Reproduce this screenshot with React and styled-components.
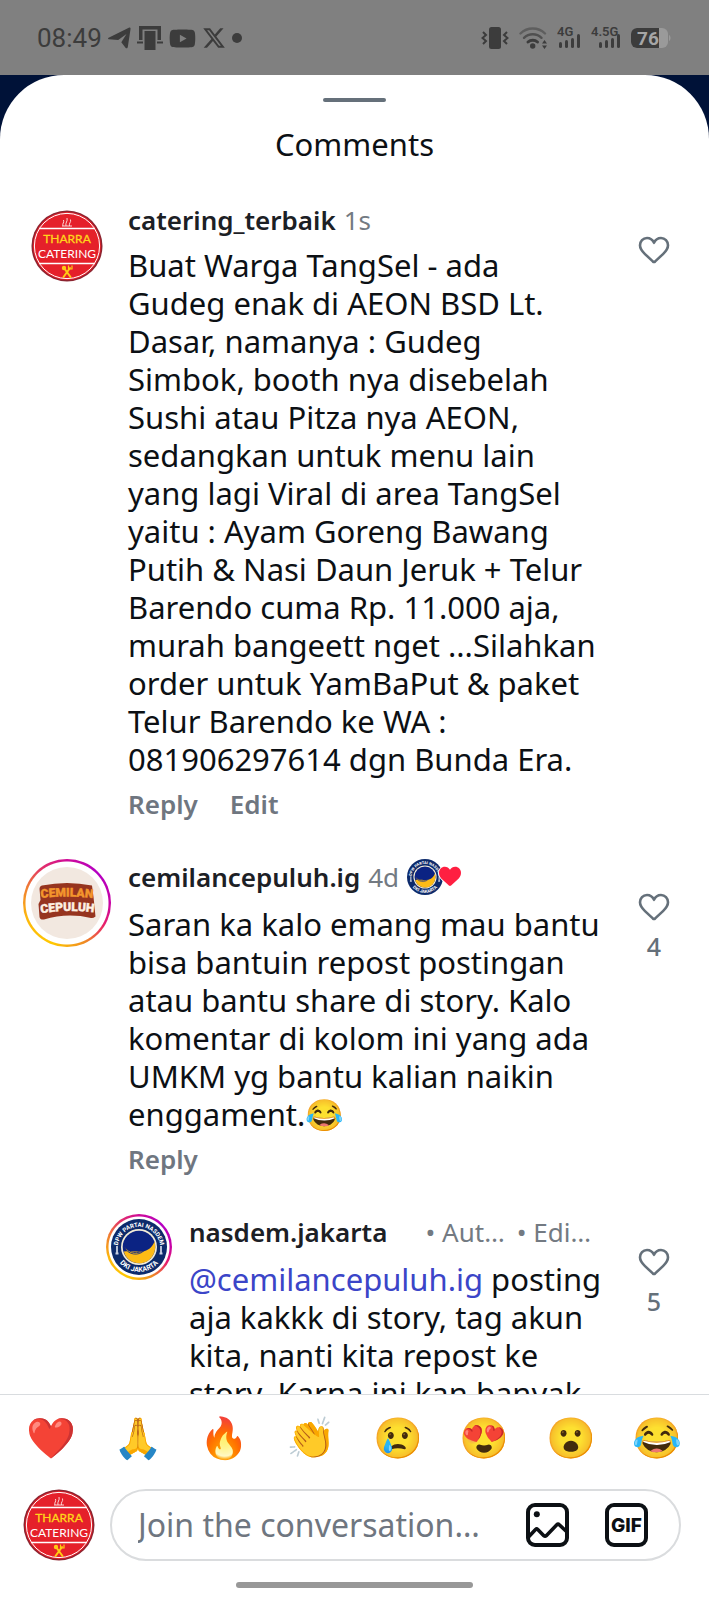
import React from 'react';
import styled, { createGlobalStyle, css } from 'styled-components';
import { FaYoutube, FaXTwitter } from 'react-icons/fa6';

const GlobalStyle = createGlobalStyle`
  * {
    box-sizing: border-box;
  }
  body {
    margin: 0;
    background: #001238;
  }
  button {
    border: none;
    padding: 0;
    background: none;
    font: inherit;
    color: inherit;
    cursor: pointer;
  }
`;

const Screen = styled.div`
  display: flex;
  flex-direction: column;
  height: 100vh;
  background: #001238;
  color: #0c1014;
  font-family: 'Noto Sans', 'Noto Color Emoji', sans-serif;
`;

/* status bar */

const StatusBar = styled.header`
  display: flex;
  flex: none;
  align-items: center;
  justify-content: space-between;
  height: 75px;
  padding: 1px 38px 0 37px;
  background: #808080;
  color: #3c3c3c;
  font-family: Roboto, sans-serif;
`;

const StatusGroup = styled.div`
  display: flex;
  align-items: center;
  gap: ${(p) => p.$gap};

  svg {
    display: block;
    flex: none;
  }
`;

const Clock = styled.time`
  font-size: 26px;
  line-height: 30px;
`;

/* sheet */

const Sheet = styled.main`
  display: flex;
  flex: 1;
  flex-direction: column;
  min-height: 0;
  border-radius: 64px 64px 0 0;
  background: #fff;
  overflow: hidden;
`;

const SheetHeader = styled.div`
  display: flex;
  flex: none;
  flex-direction: column;
  align-items: center;
  gap: 22px;
  padding-top: 23px;
`;

const Handle = styled.div`
  width: 63px;
  height: 4px;
  border-radius: 2px;
  background: #65707a;
`;

const Title = styled.h1`
  margin: 0;
  font-size: 31px;
  font-weight: 400;
  line-height: 40px;
`;

const List = styled.section`
  display: flex;
  flex: 1;
  flex-direction: column;
  gap: 37px;
  min-height: 0;
  padding-top: 38px;
  overflow: hidden;
`;

const Comment = styled.article`
  display: flex;
  flex: none;
  align-items: flex-start;
  gap: 17px;
  padding-left: ${(p) => (p.$nested ? '106px' : '23px')};
`;

const Avatar = styled.div`
  display: flex;
  flex: none;
  align-items: center;
  justify-content: center;
  width: ${(p) => (p.$small ? '66px' : '88px')};
  height: ${(p) => (p.$small ? '66px' : '88px')};
  border-radius: 50%;

  ${(p) =>
    p.$story &&
    css`
      background:
        radial-gradient(closest-side, #fff calc(100% - 3px), transparent calc(100% - 2px)),
        conic-gradient(
          #cf0a98,
          #b400c4 45deg,
          #c800a4 90deg,
          #e8206a 120deg,
          #ef8a24 155deg,
          #ffc800 200deg,
          #fdb80c 250deg,
          #f08030 290deg,
          #e2306a 325deg,
          #cf0a98
        );
    `}

  svg {
    display: block;
  }
`;

const Content = styled.div`
  flex: 1;
  min-width: 0;
`;

const Meta = styled.div`
  display: flex;
  align-items: center;
  gap: 8px;
  height: 36px;
  margin-bottom: ${(p) => (p.$loose ? '10px' : '8px')};
  color: #737a82;
  font-size: 26px;
  line-height: 36px;
  white-space: nowrap;
`;

const UserName = styled.a`
  color: #1c2025;
  font-weight: 600;
  text-decoration: none;
`;

const Tags = styled.span`
  display: flex;
  flex: 1;
  justify-content: flex-end;
  gap: 12px;
  padding-right: 12px;
`;

const LikedBy = styled.span`
  display: flex;
  align-items: center;

  svg {
    display: block;
  }
  svg + svg {
    margin-left: -6px;
  }
`;

const Body = styled.p`
  margin: 0;
  font-size: 31px;
  line-height: 38px;
`;

const Mention = styled.a`
  color: #3b45c8;
  text-decoration: none;
`;

const Actions = styled.div`
  display: flex;
  gap: 32px;
  margin-top: 8px;
  color: #6f7680;
  font-size: 26px;
  font-weight: 600;
  line-height: 36px;
`;

const Like = styled.button`
  display: flex;
  flex: none;
  flex-direction: column;
  align-items: center;
  gap: 8px;
  width: 110px;
  margin-left: -21px;
  padding-top: 34px;
  color: #65707a;
  font-size: 25px;
  font-weight: 500;
  line-height: 34px;

  svg {
    display: block;
  }
`;

/* footer */

const Footer = styled.footer`
  flex: none;
  border-top: 1px solid #d9dcdf;
  background: #fff;
`;

const QuickEmojis = styled.div`
  display: flex;
  height: 86px;
  padding: 0 8px 2px;
`;

const EmojiButton = styled.button`
  flex: 1;
  font-size: 40px;
  line-height: 48px;
`;

const Composer = styled.form`
  display: flex;
  align-items: center;
  gap: 15px;
  padding: 8px 28px 0 23px;

  > svg {
    flex: none;
  }
`;

const Field = styled.div`
  display: flex;
  flex: 1;
  align-items: center;
  gap: 36px;
  min-width: 0;
  height: 72px;
  padding: 0 31px 0 26px;
  border: 2px solid #dadcde;
  border-radius: 36px;

  svg {
    display: block;
  }
`;

const TextInput = styled.input`
  flex: 1;
  min-width: 0;
  padding: 0;
  border: none;
  outline: none;
  background: none;
  color: #0c1014;
  font: inherit;
  font-size: 32px;
  line-height: 38px;

  &::placeholder {
    color: #6f7680;
    opacity: 1;
  }
`;

const HomeBar = styled.div`
  width: 237px;
  height: 6px;
  margin: 21px auto 12px;
  border-radius: 3px;
  background: #989898;
`;

/* drawings */

const TelegramIcon = () => (
  <svg width="23" height="22" viewBox="0 0 23 22" fill="currentColor">
    <path d="M.6 10.800 20.800.8c1.300-.6 2 .1 1.700 1.400L19.800 20c-.3 1.500-1.300 1.800-2.300.7l-4.200-5.400 5.200-8.300-8.300 6.100L.8 12.300c-.9-.3-1-1.100-.2-1.500z" />
  </svg>
);

const GateIcon = () => (
  <svg width="26" height="24" viewBox="0 0 26 24" fill="currentColor">
    <path d="M2 0h22v14h-3.500V3.500h-15V14H2z" />
    <path d="M7.500 5h11v19h-11z" />
    <path d="M0 15.500h6v2H0zM20 15.500h6v2h-6z" />
  </svg>
);

const VibrateIcon = () => (
  <svg width="28" height="22" viewBox="0 0 28 22" fill="none" stroke="currentColor" strokeWidth="2">
    <rect x="8" y="0" width="12" height="22" rx="2.500" fill="currentColor" stroke="none" />
    <path d="M2 5l3 3-3.500 3L5 14l-3 3M26 5l-3 3 3.500 3L23 14l3 3" />
  </svg>
);

const WifiIcon = () => (
  <svg width="28" height="22" viewBox="0 0 28 22" fill="none" strokeWidth="2.400" strokeLinecap="round">
    <path d="M1.500 6.500a17.500 17.500 0 0 1 24.500 0" stroke="#5e5e5e" />
    <path d="M5 10.800a12.500 12.500 0 0 1 17.500 0" stroke="#505050" />
    <path d="M9 15a7 7 0 0 1 9.500 0" stroke="currentColor" strokeWidth="3" />
    <circle cx="13.700" cy="19" r="2.700" fill="currentColor" />
    <path d="M23 16.500l2.500-3.500 2.500 3.500zM23 18.500l2.500 3.500 2.500-3.500z" fill="currentColor" />
  </svg>
);

const SignalIcon = ({ label, width }) => (
  <svg width={width} height="30" viewBox={`0 0 ${width} 30`} fill="currentColor">
    <text x="0" y="13" fontSize="13" fontWeight="600">
      {label}
    </text>
    <g transform={`translate(${width - 22} 3)`}>
      <rect x="0" y="16" width="3" height="6" rx="1.500" />
      <rect x="6" y="14" width="3" height="8" rx="1.500" />
      <rect x="12" y="12" width="3" height="10" rx="1.500" />
      <rect x="18" y="8" width="3" height="14" rx="1.500" />
    </g>
  </svg>
);

const BatteryIcon = () => (
  <svg width="40" height="26" viewBox="0 -3 40 26">
    <rect width="37" height="20" rx="6" fill="#9a9a9a" />
    <path d="M6 0h22v20H6a6 6 0 0 1-6-6V6a6 6 0 0 1 6-6z" fill="#3c3c3c" />
    <path d="M38 7c2 1 2 5 0 6z" fill="#9a9a9a" />
    <text x="17" y="17" fontSize="19" fontWeight="700" fill="#a6a6a6" textAnchor="middle">
      76
    </text>
  </svg>
);

const HeartIcon = () => (
  <svg width="32" height="28" viewBox="0 0 32 28" fill="none" stroke="currentColor" strokeWidth="2.600" strokeLinejoin="round">
    <path d="M16 6.800C14.500 3.600 12 2 9 2 5 2 2 5.200 2 9.300c0 3.700 2 6 5 8.800l7.800 7.300c.8.700 1.600.7 2.400 0l7.800-7.300c3-2.800 5-5.100 5-8.800C30 5.200 27 2 23 2c-3 0-5.500 1.600-7 4.800z" />
  </svg>
);

const RedHeart = () => (
  <svg width="26" height="24" viewBox="0 0 26 24">
    <path
      d="M13 4.700C11.800 2.800 10 1.800 7.900 1.800 4.500 1.800 2 4.500 2 7.900c0 3 1.500 4.800 3.900 7l6 5.700c.7.600 1.500.6 2.200 0l6-5.700c2.400-2.200 3.900-4 3.900-7 0-3.400-2.500-6.100-5.900-6.100-2.100 0-3.900 1-5.100 2.900z"
      fill="#ff1f41"
      stroke="#fff"
      strokeWidth="2"
      paintOrder="stroke"
    />
  </svg>
);

const TharraLogo = () => (
  <svg width="72" height="72" viewBox="0 0 72 72" fontFamily="Lato, sans-serif" textAnchor="middle">
    <circle cx="36" cy="36" r="35.500" fill="#8c2430" />
    <circle cx="36" cy="36" r="34" fill="#e5202a" />
    <circle cx="36" cy="36" r="32.600" fill="none" stroke="#fff" strokeWidth="1" />
    <path d="M8.500 18.500h55M8.500 53.500h55" stroke="#fff" strokeWidth="1.300" />
    <path d="M32 16c-1-3 1.500-3 .5-6M35 16c-1-3.500 2-4.500 1-8M38.500 16c-1-3 2-3.500 1-6.500M31 16h10" fill="none" stroke="#fbd5d5" strokeWidth="1" />
    <text x="36" y="33" fontSize="12" fill="#ffd61a" stroke="#ffd61a" strokeWidth="0.300">
      THARRA
    </text>
    <text x="36" y="48" fontSize="12" fill="#fff">
      CATERING
    </text>
    <path d="M33 58l6.500 9M39 58l-6.500 9" stroke="#ffcb14" strokeWidth="2" strokeLinecap="round" />
    <circle cx="33" cy="58" r="2.200" fill="#ffcb14" />
    <path d="M37.500 55.500v3.500h3.500v-3.500" fill="none" stroke="#ffcb14" strokeWidth="1.200" />
  </svg>
);

const CemilanLogo = () => (
  <svg width="72" height="72" viewBox="0 0 72 72" fontFamily="Roboto, sans-serif" fontWeight="900" textAnchor="middle">
    <circle cx="36" cy="36" r="36" fill="#f2e8e0" />
    <path
      d="M11 18.500Q36 13.500 61 18.500L62.500 30 64.500 49.500Q62 51.500 60 51 36 45.500 13 52.500 9 53 8.500 50L7.500 37 9.500 33 8.500 22Q8.500 19 11 18.500z"
      fill="#96341f"
    />
    <path id="cemilan-top" d="M4 32Q36 27 68 32" fill="none" />
    <path id="cemilan-bottom" d="M4 47.500Q36 41 69 46.500" fill="none" />
    <text fontSize="12" fill="#f3962d" stroke="#f3962d" strokeWidth="0.400">
      <textPath href="#cemilan-top" startOffset="50%">
        CEMILAN
      </textPath>
    </text>
    <text fontSize="12" fill="#fdf0e2" stroke="#fdf0e2" strokeWidth="0.400">
      <textPath href="#cemilan-bottom" startOffset="50%">
        CEPULUH
      </textPath>
    </text>
  </svg>
);

const NasdemLogo = ({ size, id }) => (
  <svg width={size} height={size} viewBox="0 0 56 56" fontFamily="Roboto, sans-serif" fontWeight="700" textAnchor="middle">
    <circle cx="28" cy="28" r="28" fill="#0c2a6b" />
    <circle cx="28" cy="28" r="18" fill="#f3ecd8" />
    <circle cx="28" cy="28" r="16.300" fill="#0b2383" />
    <path d="M12.800 32.500C21 32 26 33 31 32.500 37 32 41.500 28 43.500 22.500 46.500 33 40 43 30.500 44.200 22 45 14.500 40 12.800 32.500z" fill="#fdbb16" />
    <path d="M13.500 27.500C18 34.500 27 35 33 31.500 28 37.500 16 36 13.500 27.500z" fill="#fdbb16" stroke="#0b2383" strokeWidth="0.800" />
    <path id={`${id}-top`} d="M6.800 29A21.200 21.200 0 0 1 49.200 29" fill="none" />
    <path id={`${id}-bottom`} d="M3 28A25 25 0 0 0 53 28" fill="none" />
    <text fontSize="6" fill="#fff">
      <textPath href={`#${id}-top`} startOffset="50%">
        DPW PARTAI NASDEM
      </textPath>
    </text>
    <text fontSize="7" fill="#fff">
      <textPath href={`#${id}-bottom`} startOffset="50%">
        DKI JAKARTA
      </textPath>
    </text>
    <path d="M6 27v7M50 27v7M4.500 34.500h3M48.500 34.500h3" stroke="#c9d0e2" strokeWidth="1.800" />
  </svg>
);

const PhotoIcon = () => (
  <svg width="43" height="44" viewBox="0 0 43 44" fill="none" stroke="#0c1014" strokeWidth="4">
    <rect x="2" y="2" width="39" height="40" rx="7" />
    <circle cx="10.800" cy="11.300" r="3" fill="#0c1014" stroke="none" />
    <path d="M2.500 34l7-7.500c.8-.7 1.500-.7 2.300 0l6 6.200c.8.700 1.700.7 2.500 0L30.800 21.800c.8-.8 1.700-.8 2.500 0L41 29" strokeWidth="3.600" />
  </svg>
);

const GifIcon = () => (
  <svg width="43" height="44" viewBox="0 0 43 44">
    <rect x="2" y="2" width="39" height="40" rx="7" fill="none" stroke="#0c1014" strokeWidth="4" />
    <text x="21.500" y="29" fontFamily="Inter, sans-serif" fontSize="19" fontWeight="800" fill="#0c1014" textAnchor="middle">
      GIF
    </text>
  </svg>
);

const emojis = ['❤️', '🙏', '🔥', '👏', '😢', '😍', '😮', '😂'];

const LikeButton = ({ count }) => (
  <Like type="button" aria-label="Like">
    <HeartIcon />
    {count}
  </Like>
);

const App = () => {
  return (
    <Screen>
      <GlobalStyle />
      <StatusBar>
        <StatusGroup $gap="6px">
          <Clock>08:49</Clock>
          <TelegramIcon />
          <GateIcon />
          <FaYoutube size={27} />
          <FaXTwitter size={24} />
          <svg width="10" height="10" viewBox="0 0 10 10">
            <circle cx="5" cy="5" r="5" fill="currentColor" />
          </svg>
        </StatusGroup>
        <StatusGroup $gap="10px">
          <VibrateIcon />
          <WifiIcon />
          <SignalIcon label="4G" width={24} />
          <SignalIcon label="4.5G" width={30} />
          <BatteryIcon />
        </StatusGroup>
      </StatusBar>

      <Sheet>
        <SheetHeader>
          <Handle />
          <Title>Comments</Title>
        </SheetHeader>

        <List>
          <Comment>
            <Avatar>
              <TharraLogo />
            </Avatar>
            <Content>
              <Meta>
                <UserName href="#catering_terbaik">catering_terbaik</UserName>
                <span>1s</span>
              </Meta>
              <Body>
                Buat Warga TangSel - ada Gudeg enak di AEON BSD Lt. Dasar, namanya : Gudeg Simbok, booth nya
                disebelah Sushi atau Pitza nya AEON, sedangkan untuk menu lain yang lagi Viral di area TangSel
                yaitu : Ayam Goreng Bawang Putih &amp; Nasi Daun Jeruk + Telur Barendo cuma Rp. 11.000 aja, murah
                bangeett nget ...Silahkan order untuk YamBaPut &amp; paket Telur Barendo ke WA : 081906297614 dgn
                Bunda Era.
              </Body>
              <Actions>
                <button type="button">Reply</button>
                <button type="button">Edit</button>
              </Actions>
            </Content>
            <LikeButton />
          </Comment>

          <Comment>
            <Avatar $story>
              <CemilanLogo />
            </Avatar>
            <Content>
              <Meta $loose>
                <UserName href="#cemilancepuluh.ig">cemilancepuluh.ig</UserName>
                <span>4d</span>
                <LikedBy>
                  <NasdemLogo size={36} id="badge" />
                  <RedHeart />
                </LikedBy>
              </Meta>
              <Body>
                Saran ka kalo emang mau bantu bisa bantuin repost postingan atau bantu share di story. Kalo
                komentar di kolom ini yang ada UMKM yg bantu kalian naikin enggament.😂
              </Body>
              <Actions>
                <button type="button">Reply</button>
              </Actions>
            </Content>
            <LikeButton count={4} />
          </Comment>

          <Comment $nested>
            <Avatar $small $story>
              <NasdemLogo size={56} id="nasdem" />
            </Avatar>
            <Content>
              <Meta $loose>
                <UserName href="#nasdem.jakarta">nasdem.jakarta</UserName>
                <Tags>
                  <span>• Aut…</span>
                  <span>• Edi…</span>
                </Tags>
              </Meta>
              <Body>
                <Mention href="#cemilancepuluh.ig">@cemilancepuluh.ig</Mention> posting aja kakkk di story, tag akun
                kita, nanti kita repost ke story. Karna ini kan banyak
              </Body>
            </Content>
            <LikeButton count={5} />
          </Comment>
        </List>

        <Footer>
          <QuickEmojis>
            {emojis.map((emoji) => (
              <EmojiButton key={emoji} type="button">
                {emoji}
              </EmojiButton>
            ))}
          </QuickEmojis>
          <Composer>
            <TharraLogo />
            <Field>
              <TextInput type="text" aria-label="Add a comment" placeholder="Join the conversation…" />
              <button type="button" aria-label="Add photo">
                <PhotoIcon />
              </button>
              <button type="button" aria-label="Add GIF">
                <GifIcon />
              </button>
            </Field>
          </Composer>
          <HomeBar />
        </Footer>
      </Sheet>
    </Screen>
  );
};

export default App;
